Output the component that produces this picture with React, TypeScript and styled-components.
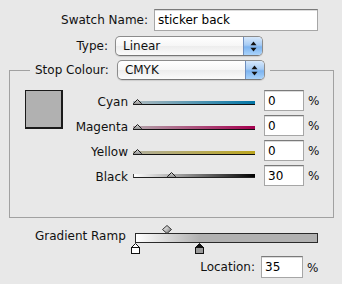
import React from 'react';
import styled, { createGlobalStyle } from 'styled-components';

const Global = createGlobalStyle`
  html, body { margin: 0; padding: 0; background: #e8e8e8; }
  body {
    font-family: "DejaVu Sans", "Liberation Sans", sans-serif;
    font-size: 12px;
    color: #111;
  }
  * { box-sizing: border-box; }
`;

const Panel = styled.div`
  width: 342px;
  height: 284px;
  background: #e8e8e8;
  padding-top: 9px;
  overflow: hidden;
  display: flex;
  flex-direction: column;
`;

const FormRow = styled.div<{ $mt?: number }>`
  display: flex;
  align-items: center;
  margin-top: ${(p) => p.$mt ?? 0}px;
`;

const RowLabel = styled.label<{ $w: number; $gap: number }>`
  width: ${(p) => p.$w}px;
  margin-right: ${(p) => p.$gap}px;
  text-align: right;
  white-space: nowrap;
`;

const TextField = styled.input<{ $w: number }>`
  width: ${(p) => p.$w}px;
  height: 22px;
  margin: 0;
  padding: 0 0 0 3px;
  font: inherit;
  font-size: 12px;
  color: #000;
  background: #fff;
  border: 1px solid #a6a6a6;
  border-top-color: #7a7a7a;
  box-shadow: inset 0 1px 0 #dcdcdc;
  outline: none;
`;

const Popup = styled.div<{ $w: number }>`
  width: ${(p) => p.$w}px;
  height: 20px;
  display: flex;
  align-items: center;
  border: 1px solid #8c8c8c;
  border-bottom-color: #777;
  border-radius: 5px;
  overflow: hidden;
  background: linear-gradient(#ffffff, #f6f6f6 50%, #ededed 51%, #fbfbfb);
  box-shadow: 0 1px 1px rgba(0, 0, 0, 0.12);
`;

const PopupText = styled.span`
  flex: 1;
  padding-left: 7px;
  white-space: nowrap;
`;

const Stepper = styled.span`
  width: 19px;
  align-self: stretch;
  display: flex;
  align-items: center;
  justify-content: center;
  border-left: 1px solid #6f8fbf;
  background: linear-gradient(#d6e8fb, #a6cbf4 45%, #7db4f0 55%, #a9d3fb);
`;

const Group = styled.fieldset`
  margin: 4px 0 0 9px;
  width: 325px;
  padding: 0;
  border: 1px solid #a1a1a1;
  min-inline-size: 0;
`;

const Legend = styled.legend`
  margin-left: 20px;
  padding: 0 5px;
  display: flex;
  align-items: center;
  height: 20px;
`;

const LegendLabel = styled.span`
  margin-right: 8px;
  white-space: nowrap;
`;

const GroupBody = styled.div`
  display: flex;
  align-items: flex-start;
  padding: 10px 0 31px 15px;
`;

const Swatch = styled.div<{ $color: string }>`
  width: 38px;
  height: 39px;
  background: ${(p) => p.$color};
  border: 1px solid #1a1a1a;
  border-right-width: 2px;
  border-bottom-width: 2px;
  flex: none;
`;

const SliderList = styled.div`
  display: flex;
  flex-direction: column;
  gap: 4px;
`;

const SliderRow = styled.div`
  display: flex;
  align-items: center;
  height: 21px;
`;

const SliderLabel = styled.span`
  width: 70px;
  padding-right: 5px;
  text-align: right;
  white-space: nowrap;
  padding-top: 2px;
`;

const TrackArea = styled.div<{ $pb: number }>`
  position: relative;
  width: 122px;
  height: 21px;
  margin-right: 9px;
  display: flex;
  align-items: flex-end;
  padding-bottom: ${(p) => p.$pb}px;
`;

const TrackBar = styled.div<{ $from: string; $to: string }>`
  width: 100%;
  height: 4px;
  background: linear-gradient(to right, ${(p) => p.$from}, ${(p) => p.$to});
  border-bottom: 1px solid #111;
`;

const BlackBar = styled.div`
  width: 100%;
  height: 4px;
  background: linear-gradient(to right, #ffffff, #000000);
  border-bottom: 1px solid #222;
  border-left: 1px solid #444;
`;

const Thumb = styled.svg<{ $pb: number }>`
  position: absolute;
  bottom: ${(p) => p.$pb}px;
  width: 9px;
  height: 6px;
  display: block;
`;

const PercentField = styled(TextField)`
  height: 21px;
`;

const Percent = styled.span`
  margin-left: 4px;
  padding-top: 1px;
`;

const RampRow = styled.div`
  display: flex;
  align-items: flex-start;
  margin-top: 7px;
  padding-left: 35px;
`;

const RampLabel = styled.span`
  width: 100px;
  margin-top: 4px;
  white-space: nowrap;
`;

const Ramp = styled.div`
  width: 183px;
  display: flex;
  flex-direction: column;
`;

const MarkerLane = styled.div<{ $h: number }>`
  position: relative;
  height: ${(p) => p.$h}px;
`;

const RampBar = styled.div`
  height: 10px;
  border: 1px solid #2a2a2a;
  background: linear-gradient(to right, #ffffff 0%, #b1b1b1 35%, #b1b1b1 100%);
`;

const Marker = styled.svg`
  position: absolute;
  top: 0;
  display: block;
`;

function StepperArrows() {
  return (
    <svg width="7" height="11" viewBox="0 0 7 11">
      <polygon points="0.5,4.2 3.5,0.6 6.5,4.2" fill="#111" />
      <polygon points="0.5,6.8 3.5,10.4 6.5,6.8" fill="#111" />
    </svg>
  );
}

function PopupButton({ w, text }: { w: number; text: string }) {
  return (
    <Popup $w={w}>
      <PopupText>{text}</PopupText>
      <Stepper>
        <StepperArrows />
      </Stepper>
    </Popup>
  );
}

type Slider = { name: string; value: number; from?: string; to?: string; black?: boolean };

const sliders: Slider[] = [
  { name: 'Cyan', value: 0, from: '#b0babe', to: '#0075a6' },
  { name: 'Magenta', value: 0, from: '#b3a6ac', to: '#a5004f' },
  { name: 'Yellow', value: 0, from: '#b0ae9e', to: '#bba51d' },
  { name: 'Black', value: 30, black: true },
];

function ThumbIcon({ value, pb }: { value: number; pb: number }) {
  const left = (value / 100) * (122 - 9);
  return (
    <Thumb $pb={pb} viewBox="0 0 9 6" style={{ left }}>
      <defs>
        <linearGradient id="thg" x1="0" y1="0" x2="0" y2="1">
          <stop offset="0" stopColor="#d8d8d8" />
          <stop offset="1" stopColor="#8c8c8c" />
        </linearGradient>
      </defs>
      <polygon points="4.5,0.5 8.5,4.5 8.5,5.5 0.5,5.5 0.5,4.5" fill="url(#thg)" stroke="#1a1a1a" strokeWidth="1" />
    </Thumb>
  );
}

function StopIcon({ pos, selected }: { pos: number; selected?: boolean }) {
  const left = (pos / 100) * 183 - 4.5;
  return (
    <Marker width="9" height="11" viewBox="0 0 9 11" style={{ left }}>
      <polygon points="4.5,0.5 8.5,4.5 0.5,4.5" fill={selected ? '#111' : '#fff'} stroke="#111" />
      <rect x="0.5" y="4.5" width="8" height="6" fill={selected ? '#9a9a9a' : '#fff'} stroke="#111" />
    </Marker>
  );
}

function Diamond({ pos }: { pos: number }) {
  const left = (pos / 100) * 183 - 5;
  return (
    <Marker width="10" height="9" viewBox="0 0 10 9" style={{ left }}>
      <defs>
        <linearGradient id="dg" x1="0" y1="0" x2="1" y2="1">
          <stop offset="0" stopColor="#ffffff" />
          <stop offset="0.5" stopColor="#bdbdbd" />
          <stop offset="1" stopColor="#555" />
        </linearGradient>
      </defs>
      <polygon points="5,0.5 9.5,4.5 5,8.5 0.5,4.5" fill="url(#dg)" stroke="#333" />
    </Marker>
  );
}

export default function App() {
  return (
    <>
      <Global />
      <Panel>
        <FormRow>
          <RowLabel $w={148} $gap={6}>Swatch Name:</RowLabel>
          <TextField $w={164} readOnly value="sticker back" />
        </FormRow>
        <FormRow $mt={5}>
          <RowLabel $w={108} $gap={7}>Type:</RowLabel>
          <PopupButton w={148} text="Linear" />
        </FormRow>
        <Group>
          <Legend>
            <LegendLabel>Stop Colour:</LegendLabel>
            <PopupButton w={148} text="CMYK" />
          </Legend>
          <GroupBody>
            <Swatch $color="#b1b1b1" />
            <SliderList>
              {sliders.map((s) => {
                const pb = s.black ? 8 : 6;
                return (
                  <SliderRow key={s.name}>
                    <SliderLabel>{s.name}</SliderLabel>
                    <TrackArea $pb={pb}>
                      {s.black ? <BlackBar /> : <TrackBar $from={s.from!} $to={s.to!} />}
                      <ThumbIcon value={s.value} pb={pb} />
                    </TrackArea>
                    <PercentField $w={40} readOnly value={String(s.value)} />
                    <Percent>%</Percent>
                  </SliderRow>
                );
              })}
            </SliderList>
          </GroupBody>
        </Group>
        <RampRow>
          <RampLabel>Gradient Ramp</RampLabel>
          <Ramp>
            <MarkerLane $h={8}>
              <Diamond pos={17.5} />
            </MarkerLane>
            <RampBar />
            <MarkerLane $h={11}>
              <StopIcon pos={0} />
              <StopIcon pos={35} selected />
            </MarkerLane>
          </Ramp>
        </RampRow>
        <FormRow $mt={2}>
          <RowLabel $w={255} $gap={6}>Location:</RowLabel>
          <TextField $w={42} readOnly value="35" />
          <Percent>%</Percent>
        </FormRow>
      </Panel>
    </>
  );
}
